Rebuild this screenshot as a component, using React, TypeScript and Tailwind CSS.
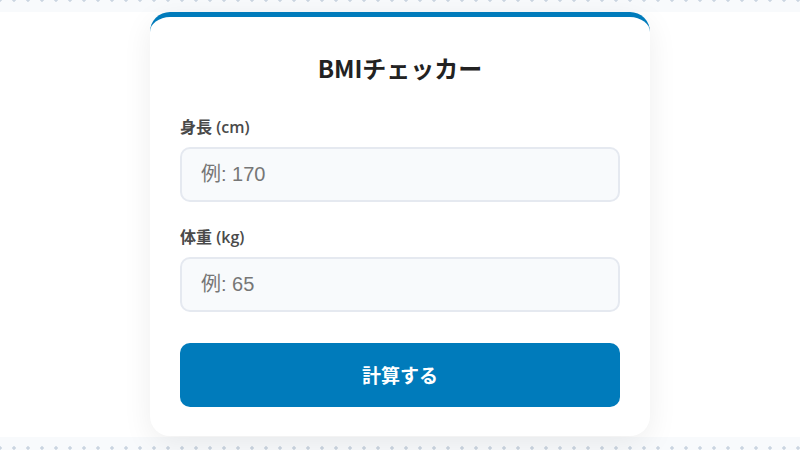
import { useState } from "react";

const JP = "font-['Noto_Sans_CJK_JP','Noto_Sans',sans-serif]";

const FIELDS = [
  { id: "height", label: "身長 (cm)", placeholder: "例: 170" },
  { id: "weight", label: "体重 (kg)", placeholder: "例: 65" },
] as const;

export default function App() {
  const [vals, setVals] = useState<Record<string, string>>({ height: "", weight: "" });

  return (
    <div className="h-[450px] w-[800px] overflow-hidden bg-[#f8fafc] bg-[radial-gradient(circle,#cbd5e1_1.5px,transparent_1.8px)] bg-[length:14px_14px] bg-[position:-7px_-7px] pt-[12px]">
      <div className="flex h-[425px] justify-center bg-white">
        <div
          className={`${JP} flex h-[424px] w-[500px] flex-col rounded-[20px] border-t-[5px] border-[#007bbb] bg-white px-[30px] pt-[33px] shadow-[0_8px_30px_rgba(0,0,0,0.07)]`}
        >
          <h1 className="text-center text-[24px] leading-[36px] font-bold text-[#222]">
            BMIチェッカー
          </h1>

          {FIELDS.map((f, i) => (
            <div key={f.id} className={i === 0 ? "mt-[29px]" : "mt-[23px]"}>
              <label
                htmlFor={f.id}
                className="block font-['Open_Sans','Noto_Sans_CJK_JP',sans-serif] text-[16px] leading-[24px] font-semibold text-[#4a4a4a]"
              >
                {f.label}
              </label>
              <input
                id={f.id}
                type="number"
                value={vals[f.id]}
                onChange={(e) => setVals({ ...vals, [f.id]: e.target.value })}
                placeholder={f.placeholder}
                className="mt-[8px] block h-[55px] w-full rounded-[10px] border-2 border-[#e5e9f0] bg-[#f8fafc] px-[19px] font-['Liberation_Sans','Noto_Sans_CJK_JP',sans-serif] text-[20px] text-[#333] outline-none placeholder:text-[#767676]"
              />
            </div>
          ))}

          <button className="mt-[31px] h-[64px] w-full rounded-[10px] bg-[#007bbb] text-[19px] font-bold text-white">
            計算する
          </button>
        </div>
      </div>
    </div>
  );
}
